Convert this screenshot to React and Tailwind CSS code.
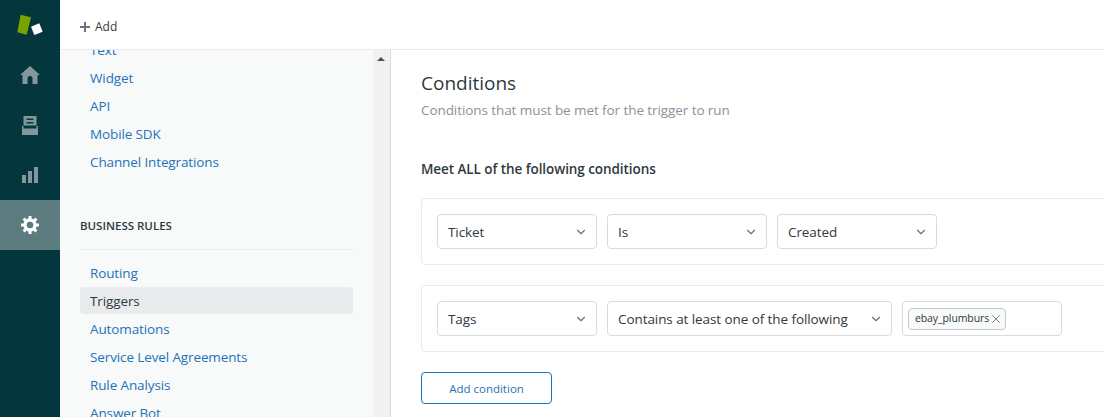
import { ChevronDown, X } from "lucide-react";

const font = { fontFamily: '"Open Sans", sans-serif' };

function Logo() {
  return (
    <svg width="28" height="22" viewBox="0 0 28 22">
      <polygon points="4.700,0.700 15,3.300 10.700,20.700 1.300,18.300" fill="#78a300" />
      <polygon points="15,12.700 23.300,9.300 26.700,17.700 18.300,21" fill="#fff" />
    </svg>
  );
}

function PlusIcon() {
  return (
    <svg width="10" height="10" viewBox="0 0 10 10" fill="#68737d">
      <rect x="4" y="0" width="2" height="10" />
      <rect x="0" y="4" width="10" height="2" />
    </svg>
  );
}

function HomeIcon() {
  return (
    <svg width="20" height="18" viewBox="0 0 20 18" fill="currentColor">
      <path d="M10 0 L20 9 H17.500 V18 H12.500 V12.500 A2.500 2.500 0 0 0 7.500 12.500 V18 H2.500 V9 H0 Z" />
    </svg>
  );
}

function InboxIcon() {
  return (
    <svg width="16" height="19" viewBox="0 0 16 19" fill="currentColor">
      <path d="M1.500 0 H14.500 V9.500 H1.500 Z M4.500 2.500 V4 H11.500 V2.500 Z M4.500 6 V7.500 H11.500 V6 Z" fillRule="evenodd" />
      <path d="M0 10 H1.500 V12.500 H14.500 V10 H16 V19 H0 Z" />
    </svg>
  );
}

function ChartIcon() {
  return (
    <svg width="16" height="16" viewBox="0 0 16 16" fill="currentColor">
      <rect x="0" y="8" width="4" height="8" />
      <rect x="6" y="4" width="4" height="12" />
      <rect x="12" y="0" width="4" height="16" />
    </svg>
  );
}

function GearIcon() {
  return (
    <svg width="18" height="18" viewBox="0 0 18 18" fill="none" stroke="currentColor">
      <circle cx="9" cy="9" r="5" strokeWidth="3.400" />
      <g strokeWidth="3" strokeLinecap="butt">
        <path d="M9 0 V3" />
        <path d="M9 15 V18" />
        <path d="M0 9 H3" />
        <path d="M15 9 H18" />
        <path d="M2.600 2.600 L4.800 4.800" />
        <path d="M13.200 13.200 L15.400 15.400" />
        <path d="M2.600 15.400 L4.800 13.200" />
        <path d="M13.200 4.800 L15.400 2.600" />
      </g>
    </svg>
  );
}

function SideLink({ children, active }) {
  return (
    <div
      className={`h-[27px] mb-px pt-[2px] flex items-center px-2.5 rounded text-[13.5px] tracking-[-0.12px] ${
        active ? "bg-[#e9ebed] text-[#2f3941]" : "text-[#1f73b7]"
      }`}
    >
      {children}
    </div>
  );
}

function Select({ label, width }) {
  return (
    <div
      className={`h-[35px] ${width} shrink-0 flex items-center justify-between pl-2.5 pr-2 border border-[#d8dcde] rounded bg-white text-[13.5px] tracking-[-0.08px] text-[#2f3941]`}
    >
      <span className="pt-[2px]">{label}</span>
      <ChevronDown size={14} strokeWidth={2} className="text-[#68737d]" />
    </div>
  );
}

export default function App() {
  return (
    <div className="flex h-[417px] w-[1105px] overflow-hidden bg-white" style={font}>
      {/* nav */}
      <nav className="w-[60px] shrink-0 bg-[#03363d] flex flex-col">
        <div className="h-[50px] flex items-center justify-center">
          <Logo />
        </div>
        <div className="h-[50px] flex items-center justify-center text-[#81999d]">
          <HomeIcon />
        </div>
        <div className="h-[50px] flex items-center justify-center text-[#81999d]">
          <InboxIcon />
        </div>
        <div className="h-[50px] flex items-center justify-center text-[#81999d]">
          <ChartIcon />
        </div>
        <div className="h-[50px] flex items-center justify-center bg-[#5b7b7f] text-white">
          <GearIcon />
        </div>
      </nav>

      <div className="flex-1 flex flex-col min-w-0">
        <header className="h-[50px] shrink-0 border-b border-[#e9ebed] bg-white flex items-center pl-5 pt-[5px] gap-[5px] text-xs text-[#2f3941]">
          <PlusIcon />
          <span>Add</span>
        </header>

        <div className="flex flex-1 min-h-0">
          {/* settings sidebar */}
          <aside className="w-[313px] shrink-0 bg-[#f8f9f9] overflow-hidden pl-5 pr-5">
            <div className="-mt-[14px]">
              <SideLink>Text</SideLink>
              <SideLink>Widget</SideLink>
              <SideLink>API</SideLink>
              <SideLink>Mobile SDK</SideLink>
              <SideLink>Channel Integrations</SideLink>
              <div className="mt-[41px] h-[34px] border-b border-[#e9ebed] text-[11.5px] font-semibold text-[#2f3941] leading-[20px]">
                BUSINESS RULES
              </div>
              <div className="mt-[9px]">
                <SideLink>Routing</SideLink>
                <SideLink active>Triggers</SideLink>
                <SideLink>Automations</SideLink>
                <SideLink>Service Level Agreements</SideLink>
                <SideLink>Rule Analysis</SideLink>
                <SideLink>Answer Bot</SideLink>
              </div>
            </div>
          </aside>

          {/* scrollbar */}
          <div className="w-[18px] shrink-0 bg-[#f1f1f1] border-r border-[#d8dcde] flex justify-center pt-[7px] pr-px">
            <div className="w-0 h-0 border-x-[4px] border-x-transparent border-b-[4px] border-b-[#505050]" />
          </div>

          {/* main */}
          <main className="flex-1 min-w-0 overflow-hidden pl-[30px] pt-[19px]">
            <h2 className="text-[19px] leading-[28px] text-[#2f3941]">Conditions</h2>
            <p className="text-[13.5px] tracking-[-0.08px] leading-[20px] mt-[3px] text-[#87929d]">
              Conditions that must be met for the trigger to run
            </p>
            <h3 className="mt-[39px] text-[13.5px] tracking-[-0.07px] font-semibold leading-[20px] text-[#2f3941]">
              Meet ALL of the following conditions
            </h3>

            <div className="mt-[19px] w-[760px] h-[67px] border border-[#e9ebed] rounded flex items-center gap-2.5 pl-[15px]">
              <Select label="Ticket" width="w-[160px]" />
              <Select label="Is" width="w-[160px]" />
              <Select label="Created" width="w-[160px]" />
            </div>

            <div className="mt-[20px] w-[760px] h-[67px] border border-[#e9ebed] rounded flex items-center gap-2.5 pl-[15px]">
              <Select label="Tags" width="w-[160px]" />
              <Select label="Contains at least one of the following" width="w-[285px]" />
              <div className="h-[35px] w-[160px] shrink-0 border border-[#d8dcde] rounded flex items-center pl-[5px]">
                <span className="h-[22px] flex items-center pl-1.5 pr-[2px] bg-[#f8f9f9] border border-[#c2c8cc] rounded text-[10.5px] tracking-[-0.1px] text-[#2f3941]">
                  ebay_plumburs
                  <X size={14} strokeWidth={1.5} className="text-[#68737d]" />
                </span>
              </div>
            </div>

            <button className="mt-[20px] pt-[2px] h-[32px] w-[131px] border border-[#1f73b7] rounded text-[11.5px] tracking-[0px] text-[#1f73b7] bg-white">
              Add condition
            </button>
          </main>
        </div>
      </div>
    </div>
  );
}
